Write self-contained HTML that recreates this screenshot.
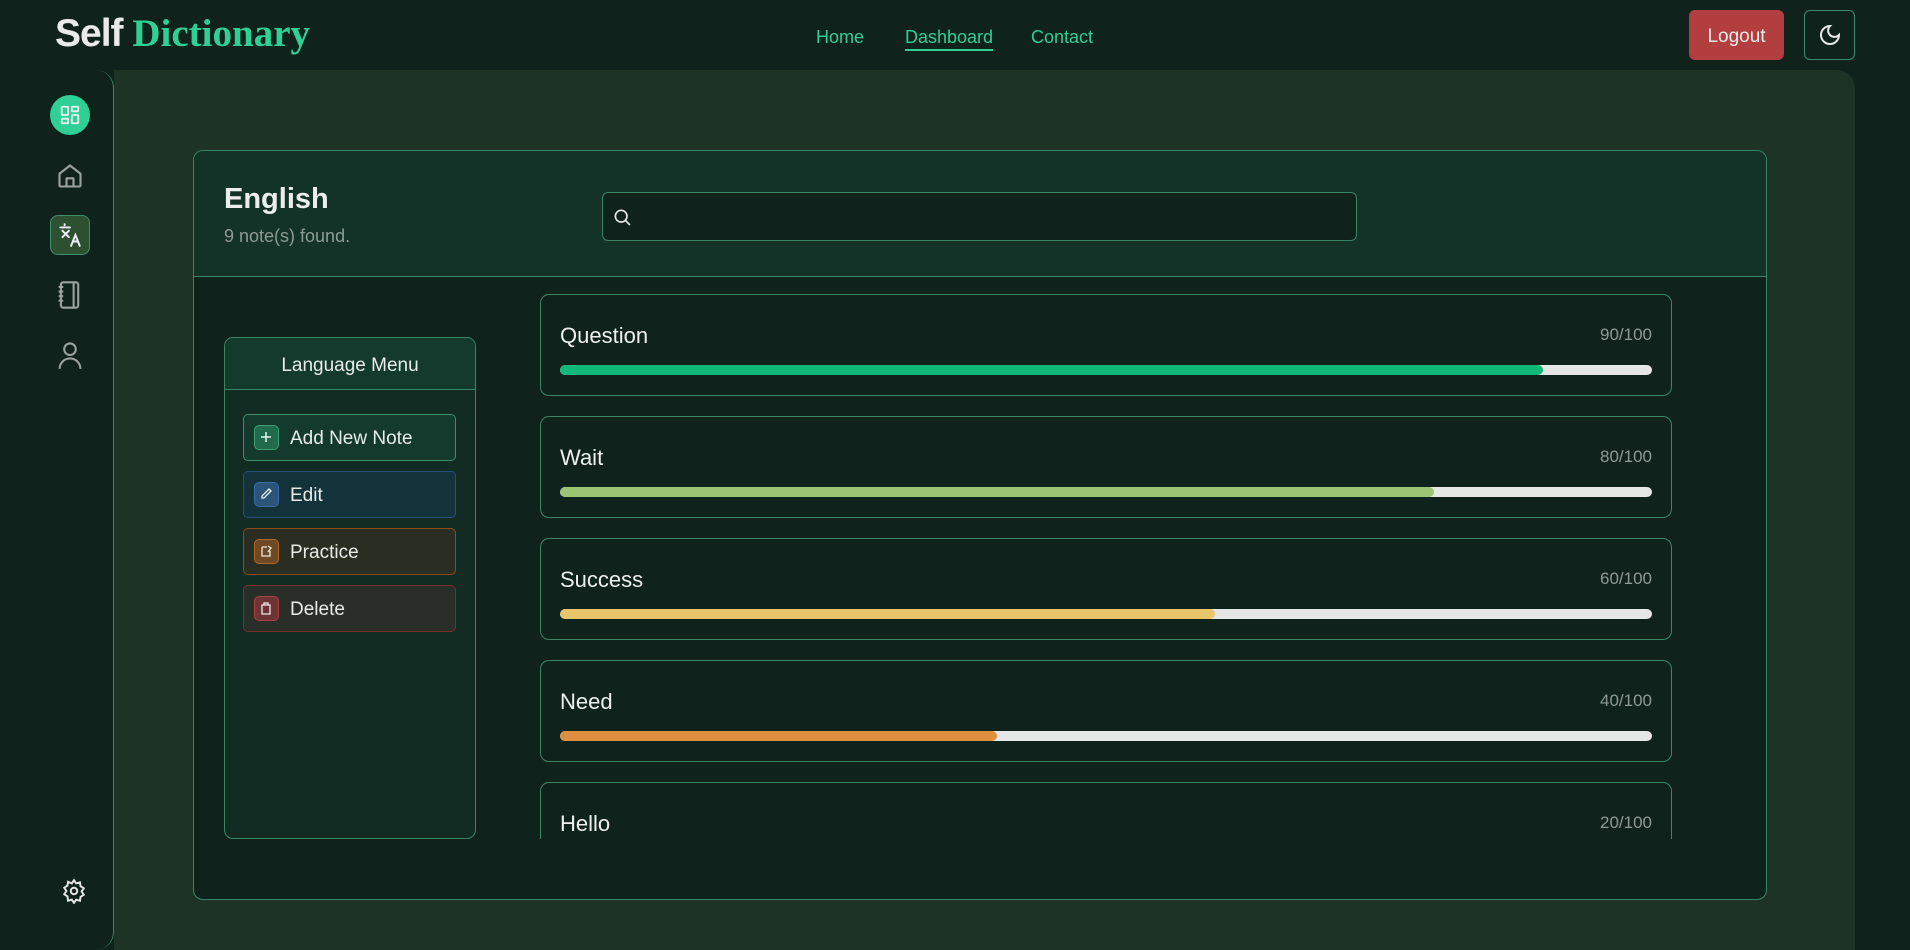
<!DOCTYPE html>
<html><head><meta charset="utf-8"><style>
*{box-sizing:border-box;margin:0;padding:0}
body{width:1910px;height:935px;overflow:hidden;background:#10221c;font-family:"Liberation Sans",sans-serif;color:#e8ece9;position:relative}
.abs{position:absolute}
.logo{left:55px;top:11px;font-size:39px;font-weight:bold;letter-spacing:-1px}
.logo .a{color:#e9ebea}
.logo .b{color:#2fd096;font-family:"Liberation Serif",serif;letter-spacing:0}
.nav a{position:absolute;top:27px;font-size:18px;color:#2fcf95;text-decoration:none}
.logout{left:1689px;top:10px;width:95px;height:50px;background:#b33e3f;border-radius:6px;color:#ececec;font-size:19px;text-align:center;line-height:53px}
.theme{left:1804px;top:10px;width:51px;height:50px;border:1px solid #3f8a6c;border-radius:6px}
.side{left:0;top:70px;width:114px;height:880px;background:#10221c;border-right:1.5px solid #3b8566;border-radius:0 18px 18px 0}
.main{left:114px;top:70px;width:1741px;height:880px;background:#1c3326;border-radius:0 18px 0 0}
.card{left:193px;top:150px;width:1574px;height:750px;border:1.5px solid #3b8566;border-radius:10px;background:#10221c;overflow:hidden}
.ch{position:absolute;left:0;top:0;width:100%;height:126px;background:#143328;border-bottom:1.5px solid #3b8566}
.search{left:602px;top:192px;width:755px;height:49px;border:1.5px solid #3b8566;border-radius:6px;background:#10221c}
.menu{left:224px;top:337px;width:252px;height:502px;border:1.5px solid #3b8566;border-radius:9px;background:#122b23;overflow:hidden}
.mh{height:52px;background:#143a2e;border-bottom:1.5px solid #3b8566;text-align:center;line-height:56px;font-size:19px;color:#e8ece9}
.btn{position:absolute;left:18px;width:213px;height:47px;border-radius:5px;border:1.5px solid;font-size:19px;line-height:48px;padding-left:46px}
.btn i{position:absolute;left:10px;top:10px;width:25px;height:25px;border-radius:5px;border:1.5px solid}
.btn svg{position:absolute;left:4px;top:4px}
.note{position:absolute;left:540px;width:1132px;height:102px;border:1.5px solid #3b8566;border-radius:9px;background:#10221c}
.note .t{position:absolute;left:19px;top:28px;font-size:22px;color:#eef0ef}
.note .s{position:absolute;right:19px;top:30px;font-size:17px;color:#8e9b95}
.bar{position:absolute;left:19px;top:70px;width:1092px;height:10px;border-radius:5px;background:#e5e7e6;overflow:hidden}
.bar b{display:block;height:100%;border-radius:5px}
.ic{position:absolute}
</style></head><body>
<div class="abs logo"><span class="a">Self</span> <span class="b">Dictionary</span></div>
<div class="nav"><a style="left:816px">Home</a><a style="left:905px;border-bottom:2px solid #2fcf95;padding-bottom:1px">Dashboard</a><a style="left:1031px">Contact</a></div>
<div class="abs logout">Logout</div>
<div class="abs theme"><svg class="ic" style="left:13px;top:12px" width="24" height="24" viewBox="0 0 24 24" fill="none" stroke="#e6e8e7" stroke-width="2" stroke-linecap="round"><path d="M12 3a6 6 0 0 0 9 9 9 9 0 1 1-9-9Z"/></svg></div>
<div class="abs main"></div>
<div class="abs side">
 <div class="ic" style="left:50px;top:25px;width:40px;height:40px;border-radius:50%;background:#30cf95"><svg style="position:absolute;left:9px;top:9px" width="22" height="22" viewBox="0 0 24 24" fill="none" stroke="#e8f5ef" stroke-width="2"><rect x="3" y="3" width="7" height="9" rx="1"/><rect x="14" y="3" width="7" height="5" rx="1"/><rect x="14" y="12" width="7" height="9" rx="1"/><rect x="3" y="16" width="7" height="5" rx="1"/></svg></div>
 <svg class="ic" style="left:56px;top:92px" width="28" height="28" viewBox="0 0 24 24" fill="none" stroke="#9aa39f" stroke-width="1.8" stroke-linejoin="round"><path d="M3 10l9-7 9 7v10a1 1 0 0 1-1 1H4a1 1 0 0 1-1-1Z"/><path d="M9 21v-7h6v7"/></svg>
 <div class="ic" style="left:50px;top:145px;width:40px;height:40px;border-radius:8px;background:#2d5030;border:1.5px solid #3f8f6d"><svg style="position:absolute;left:6px;top:5px" width="26" height="28" viewBox="0 0 24 24" fill="none" stroke="#eef" stroke-width="1.8" stroke-linecap="round"><path d="M3 5h9M7 2v1M5 8l6 6M11 8l-6 6M13 22l4-10 4 10M14.5 18h5"/></svg></div>
 <svg class="ic" style="left:55px;top:210px" width="28" height="30" viewBox="0 0 24 26" fill="none" stroke="#9aa39f" stroke-width="1.8"><rect x="5" y="2" width="15" height="22" rx="2"/><path d="M16 2v22M3 6h4M3 10h4M3 14h4M3 18h4"/></svg>
 <svg class="ic" style="left:56px;top:270px" width="28" height="30" viewBox="0 0 24 26" fill="none" stroke="#9aa39f" stroke-width="1.8"><circle cx="12" cy="8" r="5"/><path d="M3 25a9 9 0 0 1 18 0"/></svg>
 <svg class="ic" style="left:61px;top:808px" width="26" height="26" viewBox="0 0 24 24" fill="none" stroke="#e6e8e7" stroke-width="1.8"><circle cx="12" cy="12" r="3"/><path d="M12 2l2 3 3.5-1 .5 3.5 3 2-2 3 2 3-3 2-.5 3.5-3.5-1-2 3-2-3-3.5 1L6 17l-3-2 2-3-2-3 3-2 .5-3.5L10 5Z"/></svg>
</div>
<div class="abs card"><div class="ch"></div>
 <div class="abs" style="left:30px;top:32px;font-size:29px;font-weight:bold;color:#eceeed">English</div>
 <div class="abs" style="left:30px;top:75px;font-size:18px;color:#8e9b95">9 note(s) found.</div>
</div>
<div class="abs search"><svg class="ic" style="left:9px;top:14px" width="20" height="20" viewBox="0 0 24 24" fill="none" stroke="#e6e8e7" stroke-width="2" stroke-linecap="round"><circle cx="11" cy="11" r="7"/><path d="M21 21l-5-5"/></svg></div>
<div class="abs menu"><div class="mh">Language Menu</div>
 <div class="btn" style="top:76px;background:#143a2e;border-color:#3f8f6d">Add New Note<i style="background:#226a4c;border-color:#3f9f74"><svg width="14" height="14" viewBox="0 0 14 14" stroke="#e8f5ef" stroke-width="1.5"><path d="M7 2v10M2 7h10"/></svg></i></div>
 <div class="btn" style="top:133px;background:#14323a;border-color:#264f7a">Edit<i style="background:#2c5478;border-color:#3a6aa8"><svg width="14" height="14" viewBox="0 0 14 14" fill="none" stroke="#e8eef5" stroke-width="1.3"><path d="M10 2l2 2-7 7H3V9Z"/></svg></i></div>
 <div class="btn" style="top:190px;background:#2a2e22;border-color:#8a4d1a">Practice<i style="background:#6e4a24;border-color:#b0682a"><svg width="14" height="14" viewBox="0 0 14 14" fill="none" stroke="#f0e8de" stroke-width="1.3"><path d="M3 3h5M3 3v9h8V7M9 2l3 2-3 4"/></svg></i></div>
 <div class="btn" style="top:247px;background:#2a2e28;border-color:#7a2f2f">Delete<i style="background:#6e3434;border-color:#a84040"><svg width="14" height="14" viewBox="0 0 14 14" fill="none" stroke="#f0e6e6" stroke-width="1.3"><path d="M3 4h8v9H3ZM5 4V2h4v2"/></svg></i></div>
</div>
<div class="abs" style="left:0;top:0;width:1910px;height:838px;pointer-events:none">
 <div class="note" style="top:294px"><div class="t">Question</div><div class="s">90/100</div><div class="bar"><b style="width:90%;background:#10b97a"></b></div></div>
 <div class="note" style="top:416px"><div class="t">Wait</div><div class="s">80/100</div><div class="bar"><b style="width:80%;background:#9cc474"></b></div></div>
 <div class="note" style="top:538px"><div class="t">Success</div><div class="s">60/100</div><div class="bar"><b style="width:60%;background:#e8c46a"></b></div></div>
 <div class="note" style="top:660px"><div class="t">Need</div><div class="s">40/100</div><div class="bar"><b style="width:40%;background:#df8f40"></b></div></div>
</div>
<div class="abs" style="left:0;top:0;width:1910px;height:839px;overflow:hidden">
 <div class="note" style="top:782px"><div class="t">Hello</div><div class="s">20/100</div><div class="bar"><b style="width:20%;background:#d9534f"></b></div></div>
</div>
</body></html>
